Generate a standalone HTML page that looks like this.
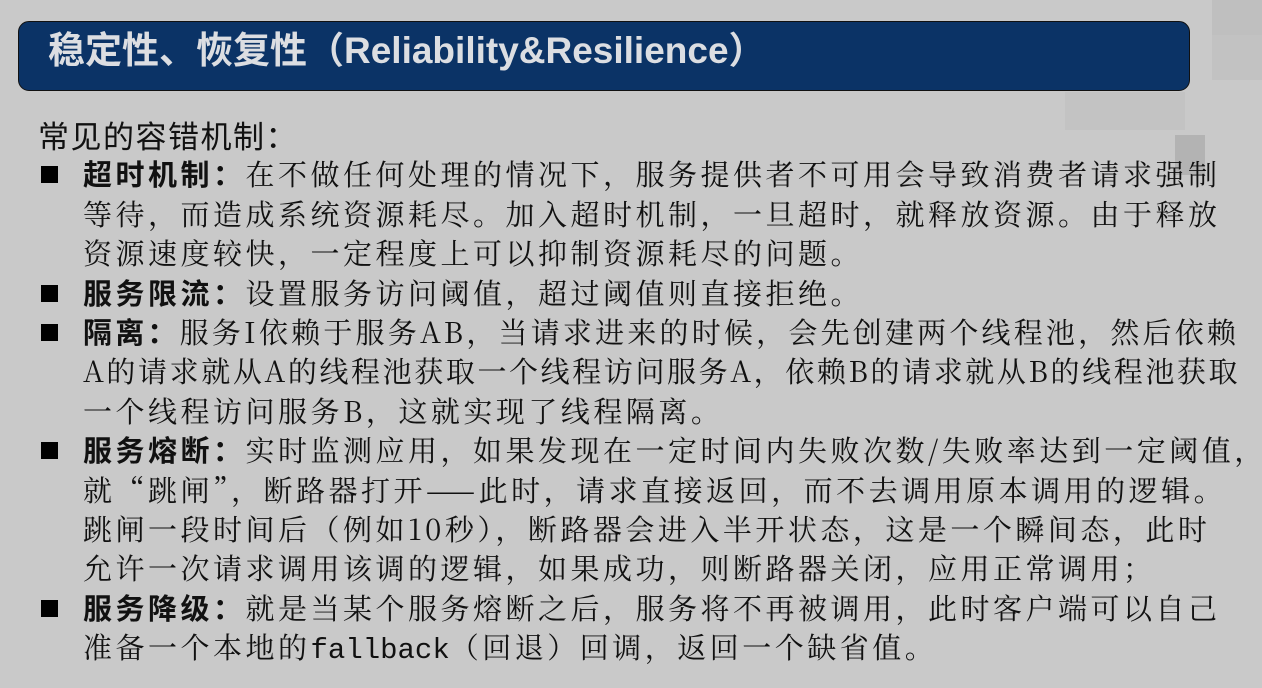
<!DOCTYPE html>
<html><head><meta charset="utf-8"><style>
*{margin:0;padding:0;box-sizing:border-box}
html,body{width:1262px;height:688px;overflow:hidden;background:#c9c9c9}
.bg{position:absolute;background:#bfbfbf}
.hdr{position:absolute;left:18px;top:21px;width:1172px;height:70px;background:#0b3366;border:1.5px solid #111;border-radius:11px}
.hdr span{position:absolute;left:29px;top:-2px;font:bold 37px "Liberation Sans","Noto Sans CJK SC",sans-serif;color:#dcdee2;white-space:nowrap}
.body{position:absolute;left:0;top:115px;font:29px "Noto Serif CJK SC","Liberation Serif",serif;color:#111;line-height:39.4px;white-space:nowrap}
.l{position:relative;height:39.4px;padding-left:83px;letter-spacing:3.5px}
.h{padding-left:38px;font:31px "Noto Sans CJK SC",sans-serif;letter-spacing:1.5px;top:-3px}
.b::before{content:"";position:absolute;left:41px;top:12px;width:17px;height:17px;background:#000}
b{font-family:"Noto Sans CJK SC",sans-serif;font-weight:bold}
.m{font-family:"Liberation Mono",monospace;letter-spacing:0}
</style></head><body>
<div class="bg" style="left:1212px;top:0;width:50px;height:45px"></div>
<div class="bg" style="left:1212px;top:35px;width:50px;height:45px;background:#c2c2c2"></div>
<div class="bg" style="left:1175px;top:135px;width:30px;height:40px;background:#b3b3b3"></div>
<div class="bg" style="left:1065px;top:92px;width:120px;height:38px;background:#c3c3c3"></div>
<div class="hdr"><span>稳定性、恢复性（Reliability&amp;Resilience）</span></div>
<div class="body">
<div class="l h">常见的容错机制：</div>
<div class="l b"><b>超时机制：</b>在不做任何处理的情况下，服务提供者不可用会导致消费者请求强制</div>
<div class="l">等待，而造成系统资源耗尽。加入超时机制，一旦超时，就释放资源。由于释放</div>
<div class="l">资源速度较快，一定程度上可以抑制资源耗尽的问题。</div>
<div class="l b"><b>服务限流：</b>设置服务访问阈值，超过阈值则直接拒绝。</div>
<div class="l b" style="letter-spacing:3.2px"><b>隔离：</b>服务I依赖于服务AB，当请求进来的时候，会先创建两个线程池，然后依赖</div>
<div class="l" style="letter-spacing:2.6px">A的请求就从A的线程池获取一个线程访问服务A，依赖B的请求就从B的线程池获取</div>
<div class="l">一个线程访问服务B，这就实现了线程隔离。</div>
<div class="l b"><b>服务熔断：</b>实时监测应用，如果发现在一定时间内失败次数/失败率达到一定阈值，</div>
<div class="l">就“跳闸”，断路器打开——此时，请求直接返回，而不去调用原本调用的逻辑。</div>
<div class="l">跳闸一段时间后（例如10秒），断路器会进入半开状态，这是一个瞬间态，此时</div>
<div class="l">允许一次请求调用该调的逻辑，如果成功，则断路器关闭，应用正常调用；</div>
<div class="l b"><b>服务降级：</b>就是当某个服务熔断之后，服务将不再被调用，此时客户端可以自己</div>
<div class="l">准备一个本地的<span class="m">fallback</span>（回退）回调，返回一个缺省值。</div>
</div>
</body></html>
